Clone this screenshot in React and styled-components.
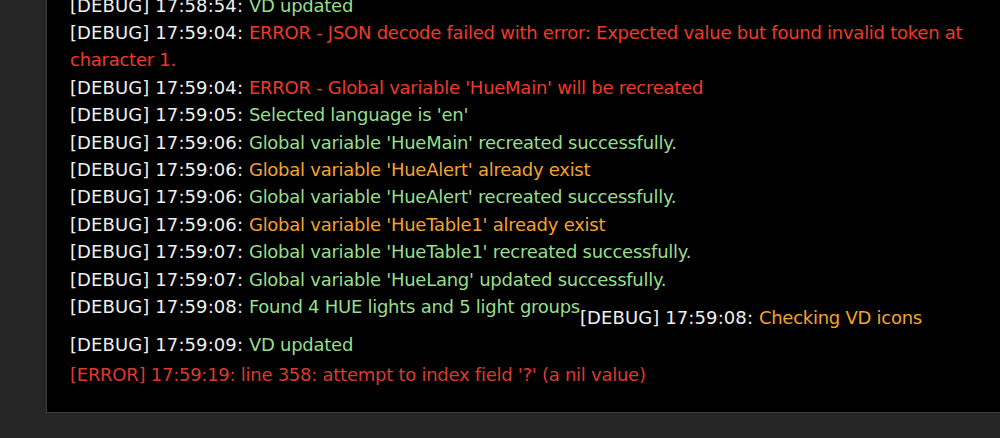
import React from "react";
import styled, { createGlobalStyle } from "styled-components";

const GlobalStyle = createGlobalStyle`
  html, body {
    margin: 0;
    padding: 0;
    background: #262626;
    overflow: hidden;
  }
`;

const Page = styled.div`
  height: 438px;
  padding-left: 46px;
  background: #262626;
  overflow: hidden;
`;

const Console = styled.div`
  margin-top: -17.5px;
  margin-right: -30px;
  background: #000;
  border: 1px solid #3d3d3d;
  padding: 8px 48px 23.5px 23px;
  font-family: "DejaVu Sans", Verdana, sans-serif;
  font-size: 18px;
  line-height: 27.4px;
  color: #f0f0f0;
`;

const Line = styled.div`
  margin-top: ${(p) => (p.$gap ? "2px" : "0")};
`;

const Stamp = styled.span`
  color: #f0f0f0;
  letter-spacing: 0.1px;
`;

const Msg = styled.span`
  letter-spacing: -0.26px;
  color: ${(p) =>
    p.$kind === "error"
      ? "#ee3a2b"
      : p.$kind === "fatal"
      ? "#dc3a2d"
      : p.$kind === "warn"
      ? "#f4a331"
      : "#97df8b"};
`;

const Dropped = styled.span`
  vertical-align: -11px;
`;

const log = [
  ["17:58:54", "ok", "VD updated"],
  ["17:59:04", "error", "ERROR - JSON decode failed with error: Expected value but found invalid token at character 1."],
  ["17:59:04", "error", "ERROR - Global variable 'HueMain' will be recreated"],
  ["17:59:05", "ok", "Selected language is 'en'"],
  ["17:59:06", "ok", "Global variable 'HueMain' recreated successfully."],
  ["17:59:06", "warn", "Global variable 'HueAlert' already exist"],
  ["17:59:06", "ok", "Global variable 'HueAlert' recreated successfully."],
  ["17:59:06", "warn", "Global variable 'HueTable1' already exist"],
  ["17:59:07", "ok", "Global variable 'HueTable1' recreated successfully."],
  ["17:59:07", "ok", "Global variable 'HueLang' updated successfully."],
];

const App = () => {
  return (
    <Page>
      <GlobalStyle />
      <Console>
        {log.map(([t, kind, text], i) => (
          <Line key={i}>
            <Stamp>[DEBUG] {t}: </Stamp>
            <Msg $kind={kind}>{text}</Msg>
          </Line>
        ))}
        <Line>
          <Stamp>[DEBUG] 17:59:08: </Stamp>
          <Msg>Found 4 HUE lights and 5 light groups</Msg>
          <Dropped>
            <Stamp>[DEBUG] 17:59:08: </Stamp>
            <Msg $kind="warn">Checking VD icons</Msg>
          </Dropped>
        </Line>
        <Line>
          <Stamp>[DEBUG] 17:59:09: </Stamp>
          <Msg>VD updated</Msg>
        </Line>
        <Line $gap>
          <Msg $kind="fatal">[ERROR] 17:59:19: line 358: attempt to index field '?' (a nil value)</Msg>
        </Line>
      </Console>
    </Page>
  );
};

export default App;
